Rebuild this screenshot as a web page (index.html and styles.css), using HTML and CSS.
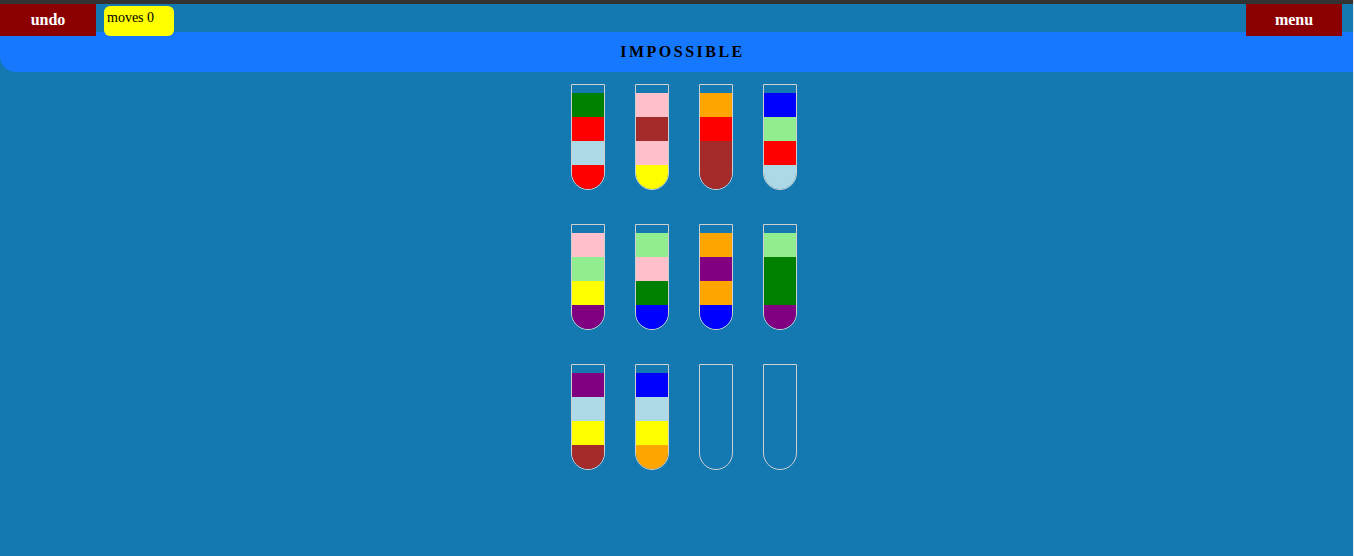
FILE: index.html
```html
<!DOCTYPE html>
<html>
<head>
<meta charset="utf-8">
<link rel="stylesheet" href="styles.css">
</head>
<body>
<div class="app">
  <div class="topbar">
    <div class="btn">undo</div>
    <div class="moves">moves 0</div>
    <div class="spacer"></div>
    <div class="btn menu">menu</div>
  </div>
  <div class="header">IMPOSSIBLE</div>
  <div class="board">
    <div class="tube"><div class="empty"></div><div class="c green"></div><div class="c red"></div><div class="c lightblue"></div><div class="c red"></div></div>
    <div class="tube"><div class="empty"></div><div class="c pink"></div><div class="c brown"></div><div class="c pink"></div><div class="c yellow"></div></div>
    <div class="tube"><div class="empty"></div><div class="c orange"></div><div class="c red"></div><div class="c brown"></div><div class="c brown"></div></div>
    <div class="tube"><div class="empty"></div><div class="c blue"></div><div class="c lightgreen"></div><div class="c red"></div><div class="c lightblue"></div></div>
    <div class="tube"><div class="empty"></div><div class="c pink"></div><div class="c lightgreen"></div><div class="c yellow"></div><div class="c purple"></div></div>
    <div class="tube"><div class="empty"></div><div class="c lightgreen"></div><div class="c pink"></div><div class="c green"></div><div class="c blue"></div></div>
    <div class="tube"><div class="empty"></div><div class="c orange"></div><div class="c purple"></div><div class="c orange"></div><div class="c blue"></div></div>
    <div class="tube"><div class="empty"></div><div class="c lightgreen"></div><div class="c green"></div><div class="c green"></div><div class="c purple"></div></div>
    <div class="tube"><div class="empty"></div><div class="c purple"></div><div class="c lightblue"></div><div class="c yellow"></div><div class="c brown"></div></div>
    <div class="tube"><div class="empty"></div><div class="c blue"></div><div class="c lightblue"></div><div class="c yellow"></div><div class="c orange"></div></div>
    <div class="tube"></div>
    <div class="tube"></div>
  </div>
</div>
</body>
</html>
```
FILE: styles.css
```css
html {
  background: #eeeeee;
}
body {
  margin: 0;
  width: 1353px;
  height: 556px;
  font-family: "Liberation Serif", "Times New Roman", serif;
}
.app {
  height: 552px;
  border-top: 4px solid #333333;
  background: #1479b0;
}
.topbar {
  display: flex;
  align-items: flex-start;
  height: 28px;
}
.btn {
  position: relative;
  z-index: 1;
  width: 96px;
  height: 32px;
  background: #8b0000;
  color: #ffffff;
  font-weight: bold;
  font-size: 16px;
  line-height: 32px;
  text-align: center;
}
.menu {
  margin-right: 11px;
}
.spacer {
  flex: 1;
}
.moves {
  position: relative;
  z-index: 1;
  box-sizing: border-box;
  width: 70px;
  height: 30px;
  margin-left: 8px;
  margin-top: 2px;
  padding: 4px 0 0 3px;
  background: #ffff00;
  border-radius: 6px;
  font-size: 14px;
  line-height: 16px;
  color: #000;
}
.header {
  height: 40px;
  background: #1677ff;
  border-bottom-left-radius: 16px;
  color: #000;
  font-weight: bold;
  font-size: 16px;
  letter-spacing: 2.5px;
  line-height: 40px;
  text-align: center;
  padding-left: 12px;
}
.board {
  display: grid;
  grid-template-columns: repeat(4, 34px);
  column-gap: 30px;
  row-gap: 34px;
  width: 226px;
  margin: 12px auto 0;
  padding-left: 14px;
}
.tube {
  width: 34px;
  height: 106px;
  box-sizing: border-box;
  border: 1px solid #d0d0d0;
  border-radius: 0 0 17px 17px;
  overflow: hidden;
  display: flex;
  flex-direction: column;
}
.empty {
  height: 8px;
}
.c {
  height: 24px;
}
.green { background: #008000; }
.red { background: #ff0000; }
.lightblue { background: #add8e6; }
.pink { background: #ffc0cb; }
.brown { background: #a52a2a; }
.yellow { background: #ffff00; }
.orange { background: #ffa500; }
.blue { background: #0000ff; }
.lightgreen { background: #90ee90; }
.purple { background: #800080; }
```
